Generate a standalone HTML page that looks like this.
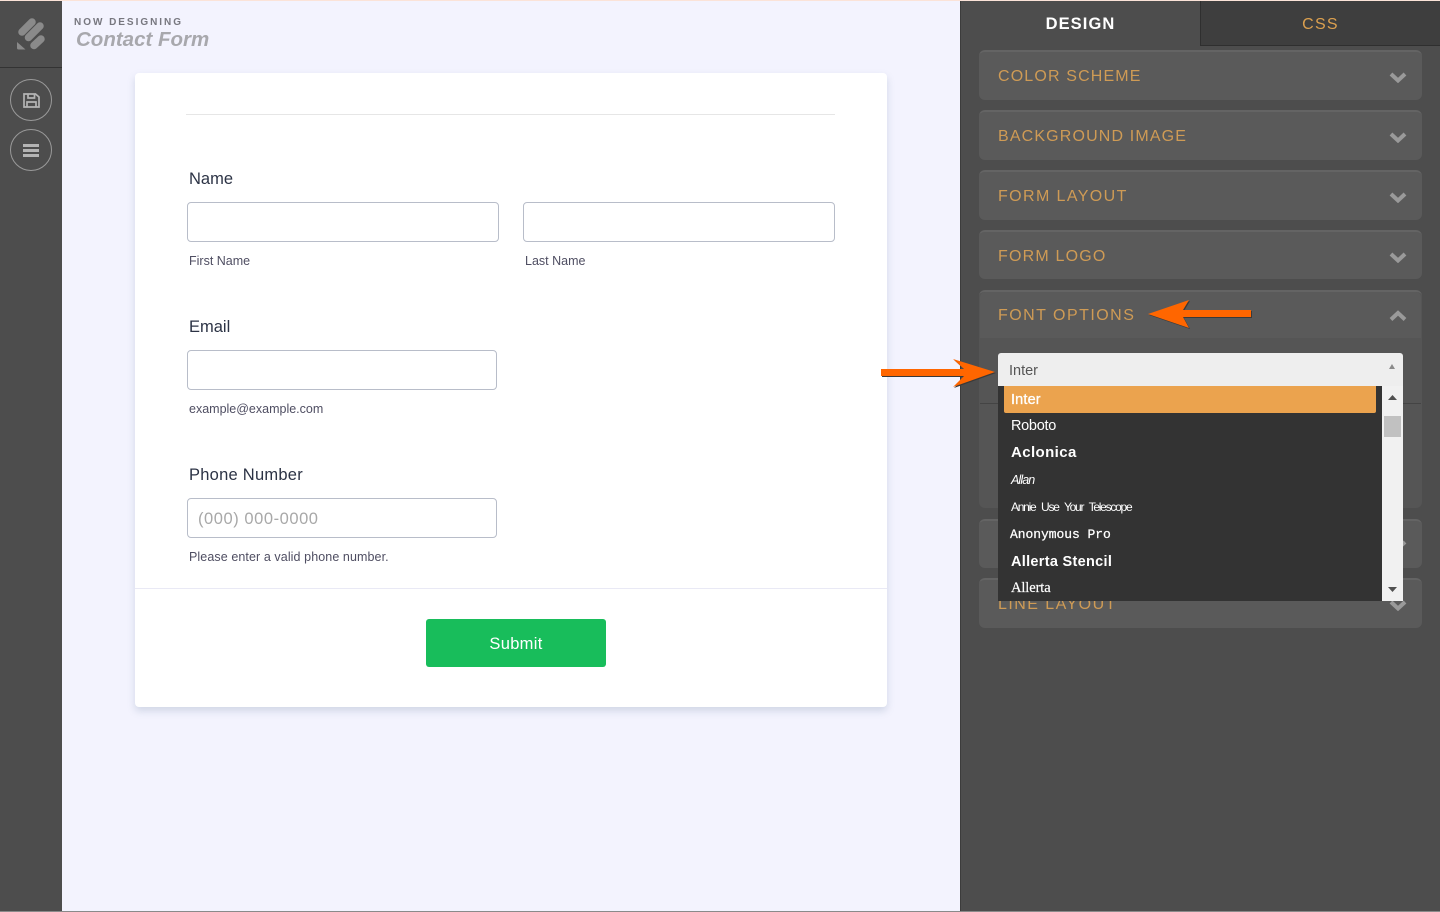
<!DOCTYPE html>
<html><head><meta charset="utf-8"><title>Contact Form</title>
<style>
*{box-sizing:border-box}
html,body{margin:0;padding:0;width:1440px;height:912px;overflow:hidden;background:#f3f3fe;font-family:"Liberation Sans",sans-serif}
.a{position:absolute}
.t{position:absolute;white-space:nowrap;line-height:1}
.lab{font-size:16.5px;color:#2c3345}
.sub{font-size:12.5px;color:#4f4e62}
.inp{position:absolute;background:#fff;border:1px solid #b8bdc9;border-radius:4px;height:40px}
.pn{position:absolute;left:979px;width:443px;background:#5a5a5a;border-radius:6px;border-top:2px solid #646464}
.pt{position:absolute;left:998px;white-space:nowrap;line-height:1;font-size:16px;letter-spacing:1.15px;color:#cf9b55}
.chev{position:absolute;left:1389px}
.opt{position:absolute;left:1011px;color:#fff;white-space:nowrap;line-height:1}
</style></head><body>
<div class="a" style="left:0;top:0;width:1440px;height:1px;background:#fbe3d8;z-index:9"></div>
<div class="a" style="left:0;top:911px;width:1440px;height:1px;background:#8a8a8a;z-index:9"></div>

<!-- left sidebar -->
<div class="a" style="left:0;top:0;width:62px;height:912px;background:#4d4d4d"></div>
<div class="a" style="left:0;top:67px;width:62px;height:1px;background:#333"></div>
<svg class="a" style="left:0;top:0" width="62" height="62" viewBox="0 0 62 62">
<g stroke="#8a8a8a" stroke-width="7.500" stroke-linecap="round"><path d="M22 32 32 22"/><path d="M28.500 37.500 40 26"/><path d="M34 45.500 41 39"/></g>
<path d="M17 42 25.500 49.500H18.500Q17 49.500 17 48Z" fill="#8a8a8a"/></svg>
<div class="a" style="left:10px;top:79px;width:42px;height:42px;border:1px solid #9a9a9a;border-radius:50%"></div>
<div class="a" style="left:10px;top:129px;width:42px;height:42px;border:1px solid #9a9a9a;border-radius:50%"></div>
<svg class="a" style="left:23px;top:93px" width="17" height="15" viewBox="0 0 17 15" fill="none" stroke="#b4b4b4" stroke-width="1.700"><path d="M1 1H12.500L16 4V14H1Z"/><path d="M5 1V5H11.500V1"/><path d="M4 14V9H13V14"/></svg>
<div class="a" style="left:23px;top:144px;width:16px;height:3px;background:#b4b4b4"></div>
<div class="a" style="left:23px;top:149px;width:16px;height:3px;background:#b4b4b4"></div>
<div class="a" style="left:23px;top:154px;width:16px;height:3px;background:#b4b4b4"></div>

<div class="t" style="left:74px;top:18px;font-size:10px;font-weight:bold;letter-spacing:1.970px;color:#77777f">NOW DESIGNING</div>
<div class="t" style="left:76px;top:30px;font-size:20.500px;font-weight:bold;font-style:italic;color:#a8a8ad">Contact Form</div>

<!-- form card -->
<div class="a" style="left:135px;top:73px;width:752px;height:634px;background:#fff;border-radius:4px;box-shadow:0 4px 8px rgba(87,114,147,.22)"></div>
<div class="a" style="left:186px;top:114px;width:649px;height:1px;background:#e6e6e6"></div>

<div class="t lab" style="left:189px;top:171px">Name</div>
<div class="inp" style="left:187px;top:202px;width:312px"></div>
<div class="inp" style="left:523px;top:202px;width:312px"></div>
<div class="t sub" style="left:189px;top:255px">First Name</div>
<div class="t sub" style="left:525px;top:255px">Last Name</div>

<div class="t lab" style="left:189px;top:319px">Email</div>
<div class="inp" style="left:187px;top:350px;width:310px"></div>
<div class="t sub" style="left:189px;top:403px">example@example.com</div>

<div class="t lab" style="left:189px;top:467px;letter-spacing:.25px">Phone Number</div>
<div class="inp" style="left:187px;top:498px;width:310px"></div>
<div class="t" style="left:198px;top:511px;font-size:16.500px;letter-spacing:.55px;color:#a8a8a8">(000) 000-0000</div>
<div class="t sub" style="left:189px;top:551px;letter-spacing:.09px">Please enter a valid phone number.</div>

<div class="a" style="left:135px;top:588px;width:752px;height:1px;background:#e9e9f5"></div>
<div class="a" style="left:426px;top:619px;width:180px;height:48px;background:#18bd5b;border-radius:3px"></div>
<div class="t" style="left:426px;top:636px;width:180px;text-align:center;font-size:16.500px;letter-spacing:.3px;color:#fff">Submit</div>

<!-- right panel -->
<div class="a" style="left:960px;top:0;width:480px;height:912px;background:#4d4d4d;border-left:1px solid #3c3c3c"></div>
<div class="a" style="left:1200px;top:1px;width:240px;height:45px;background:#3e3e3e;border-left:1px solid #2f2f2f;border-bottom:1px solid #2f2f2f"></div>
<div class="t" style="left:961px;top:16px;width:239px;text-align:center;font-size:16.500px;font-weight:bold;letter-spacing:1.100px;color:#fff">DESIGN</div>
<div class="t" style="left:1201px;top:17px;width:239px;text-align:center;font-size:16px;letter-spacing:1.300px;color:#dca04f">CSS</div>

<div class="pn" style="top:50px;height:50px"></div><div class="pt" style="top:69px">COLOR SCHEME</div>
<div class="pn" style="top:110px;height:50px"></div><div class="pt" style="top:129px">BACKGROUND IMAGE</div>
<div class="pn" style="top:170px;height:50px"></div><div class="pt" style="top:189px;letter-spacing:1.400px">FORM LAYOUT</div>
<div class="pn" style="top:230px;height:49px"></div><div class="pt" style="top:249px;letter-spacing:1.200px">FORM LOGO</div>
<div class="pn" style="top:290px;height:218px;background:#555"></div>
<div class="a" style="left:980px;top:292px;width:441px;height:46px;background:#5a5a5a;border-radius:5px 5px 0 0"></div>
<div class="a" style="left:980px;top:403px;width:441px;height:1px;background:#444"></div>
<div class="pt" style="top:308px;letter-spacing:1.470px">FONT OPTIONS</div>
<div class="pn" style="top:519px;height:49px"></div>
<div class="pn" style="top:578px;height:50px"></div><div class="pt" style="top:597px;letter-spacing:1.450px">LINE LAYOUT</div>

<svg class="chev" style="top:71px" width="18" height="12" viewBox="0 0 18 12"><path d="M2 3 9 9.500 16 3" fill="none" stroke="#9a9a9a" stroke-width="4"/></svg>
<svg class="chev" style="top:131px" width="18" height="12" viewBox="0 0 18 12"><path d="M2 3 9 9.500 16 3" fill="none" stroke="#9a9a9a" stroke-width="4"/></svg>
<svg class="chev" style="top:191px" width="18" height="12" viewBox="0 0 18 12"><path d="M2 3 9 9.500 16 3" fill="none" stroke="#9a9a9a" stroke-width="4"/></svg>
<svg class="chev" style="top:251px" width="18" height="12" viewBox="0 0 18 12"><path d="M2 3 9 9.500 16 3" fill="none" stroke="#9a9a9a" stroke-width="4"/></svg>
<svg class="chev" style="top:310px" width="18" height="12" viewBox="0 0 18 12"><path d="M2 9.500 9 3 16 9.500" fill="none" stroke="#9a9a9a" stroke-width="4"/></svg>
<svg class="chev" style="top:539px" width="18" height="12" viewBox="0 0 18 12"><path d="M2 3 9 9.500 16 3" fill="none" stroke="#9a9a9a" stroke-width="4"/></svg>
<svg class="chev" style="top:599px" width="18" height="12" viewBox="0 0 18 12"><path d="M2 3 9 9.500 16 3" fill="none" stroke="#9a9a9a" stroke-width="4"/></svg>

<!-- select -->
<div class="a" style="left:998px;top:353px;width:405px;height:33px;background:#eee;border-radius:3px 3px 0 0"></div>
<div class="t" style="left:1009px;top:364px;font-size:14.500px;color:#555">Inter</div>
<svg class="a" style="left:1389px;top:364px" width="6" height="5"><path d="M3 0 6 5H0Z" fill="#8a8a8a"/></svg>
<div class="a" style="left:998px;top:386px;width:384px;height:215px;background:#333"></div>
<div class="a" style="left:1382px;top:386px;width:21px;height:215px;background:#f1f1f1"></div>
<div class="a" style="left:1384px;top:416px;width:17px;height:21px;background:#c1c1c1"></div>
<svg class="a" style="left:1388px;top:395px" width="9" height="5"><path d="M4.500 0 9 5H0Z" fill="#505050"/></svg>
<svg class="a" style="left:1388px;top:587px" width="9" height="5"><path d="M4.500 5 9 0H0Z" fill="#505050"/></svg>
<div class="a" style="left:1004px;top:386px;width:372px;height:27px;background:#eba34e;border-radius:0 0 2px 2px"></div>

<div class="opt" style="top:393px;font-size:14.500px;letter-spacing:.15px;-webkit-text-stroke:.3px #fff">Inter</div>
<div class="opt" style="top:419px;font-size:14.500px;letter-spacing:-.3px">Roboto</div>
<div class="opt" style="top:445px;font-size:15px;font-weight:bold;letter-spacing:.4px">Aclonica</div>
<div class="opt" style="top:474px;font-size:12.500px;font-style:italic;letter-spacing:-.9px">Allan</div>
<div class="opt" style="top:501px;font-size:12px;letter-spacing:-1.250px;word-spacing:3.500px">Annie Use Your Telescope</div>
<div class="opt" style="top:528px;left:1010px;font-size:13px;font-family:'Liberation Mono',monospace;-webkit-text-stroke:.25px #fff;letter-spacing:-.05px">Anonymous Pro</div>
<div class="opt" style="top:555px;font-size:14.500px;font-weight:bold;letter-spacing:.3px">Allerta Stencil</div>
<div class="opt" style="top:581px;font-size:14.500px;font-family:'Liberation Serif',serif;-webkit-text-stroke:.2px #fff;letter-spacing:-.1px">Allerta</div>

<!-- arrows -->
<svg class="a" style="left:875px;top:295px;z-index:5" width="385" height="100" viewBox="875 295 385 100">
<g fill="#ff6600" style="filter:drop-shadow(1px 1px 0 #3a3a3a)">
<path d="M881 369H964L953 359 995 372 953 387 964 376H881Z"/>
<path d="M1251 310H1183L1189 300 1148 314 1189 328 1183 317H1251Z"/>
</g></svg>
</body></html>
